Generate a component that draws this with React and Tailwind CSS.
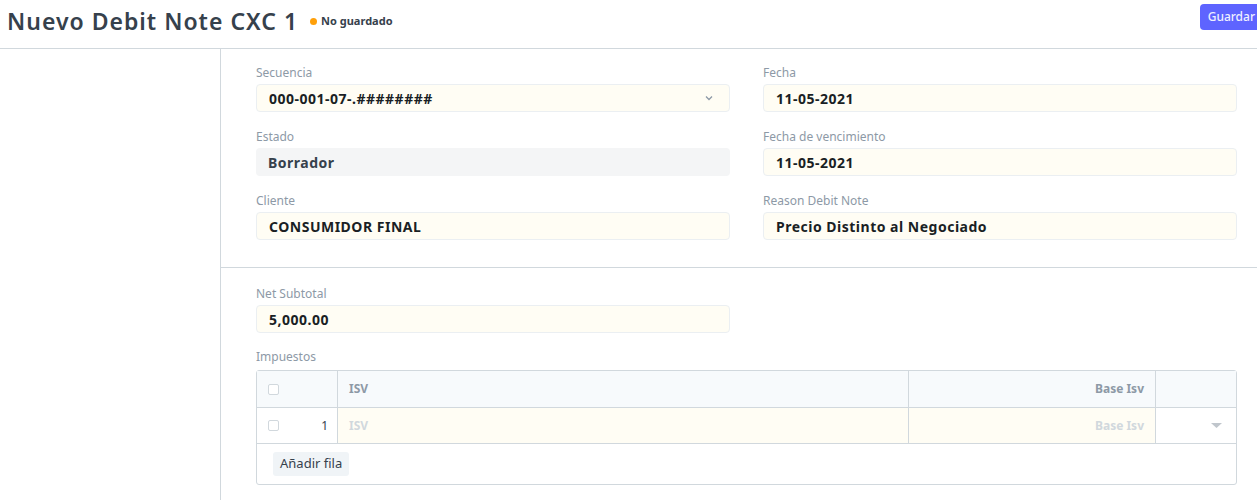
import React from 'react';

const font = { fontFamily: '"Noto Sans", "Open Sans", sans-serif' };

function Field({ label, value, select, readOnly }) {
  return (
    <div className="flex flex-col">
      <label className="text-[12px] leading-[18px] text-[#8d99a6] mb-[2px]">{label}</label>
      {readOnly ? (
        <div className="h-[28px] rounded-[4px] bg-[#f4f5f6] px-[12px] flex items-center text-[14px] tracking-[0.5px] font-bold text-[#36414c]">
          {value}
        </div>
      ) : (
        <div className="h-[28px] rounded-[4px] border border-[#ebeff2] bg-[#fffdf4] px-[12px] flex items-center justify-between text-[14px] tracking-[0.5px] font-bold text-[#1a1f24]">
          <span>{value}</span>
          {select && (
            <svg width="10" height="10" viewBox="0 0 10 10" className="mr-[3px]">
              <path d="M2 3.5 L5 6.5 L8 3.5" fill="none" stroke="#8d99a6" strokeWidth="1.3" />
            </svg>
          )}
        </div>
      )}
    </div>
  );
}

function Checkbox() {
  return <span className="inline-block w-[11px] h-[11px] rounded-[2px] border border-[#d1d8dd] bg-white"></span>;
}

export default function App() {
  return (
    <div className="w-[1257px] h-[500px] overflow-hidden bg-white" style={font}>
      <div className="w-[1272px]">
        {/* cabecera */}
        <div className="h-[49px] flex items-start justify-between border-b border-[#d1d8dd] pl-[7px] pr-[7px]">
          <div className="flex items-center mt-[5px]">
            <h1 className="text-[23px] leading-[32px] font-semibold text-[#36414c] tracking-[1px]">Nuevo Debit Note CXC 1</h1>
            <span className="ml-[12px] w-[7px] h-[7px] rounded-full bg-[#ffa00a]"></span>
            <span className="ml-[4px] text-[11px] font-bold text-[#36414c]">No guardado</span>
          </div>
          <button className="mt-[4px] h-[26px] pl-[8px] pr-[10px] rounded-[4px] bg-[#5e64ff] text-[#eef0ff] text-[12px] font-medium">
            Guardar
          </button>
        </div>

        <div className="flex">
          {/* barra lateral */}
          <div className="w-[221px] shrink-0 border-r border-[#d1d8dd] h-[460px]"></div>

          <div className="flex-1">
            {/* sección principal */}
            <div className="px-[35px] pt-[15px] pb-[27px] border-b border-[#d1d8dd] grid grid-cols-2 gap-x-[33px] gap-y-[16px]">
              <Field label="Secuencia" value="000-001-07-.########" select />
              <Field label="Fecha" value="11-05-2021" />
              <Field label="Estado" value="Borrador" readOnly />
              <Field label="Fecha de vencimiento" value="11-05-2021" />
              <Field label="Cliente" value="CONSUMIDOR FINAL" />
              <Field label="Reason Debit Note" value="Precio Distinto al Negociado" />
            </div>

            {/* totales */}
            <div className="px-[35px] pt-[17px]">
              <div className="grid grid-cols-2 gap-x-[33px]">
                <Field label="Net Subtotal" value="5,000.00" />
              </div>

              <div className="mt-[15px]">
                <label className="block text-[12px] leading-[18px] text-[#8d99a6] mb-[4px]">Impuestos</label>
                <div className="border border-[#d1d8dd] rounded-[3px] text-[12px]">
                  <div className="flex h-[37px] bg-[#f7fafc] border-b border-[#d1d8dd] font-bold text-[#8d99a6]">
                    <div className="w-[81px] flex items-center pl-[11px] border-r border-[#d1d8dd]">
                      <Checkbox />
                    </div>
                    <div className="w-[571px] flex items-center pl-[11px] border-r border-[#d1d8dd]">ISV</div>
                    <div className="w-[247px] flex items-center justify-end pr-[11px] border-r border-[#d1d8dd]">Base Isv</div>
                    <div className="flex-1"></div>
                  </div>
                  <div className="flex h-[36px] border-b border-[#d1d8dd]">
                    <div className="w-[81px] flex items-center justify-between pl-[11px] pr-[9px] border-r border-[#d1d8dd]">
                      <Checkbox />
                      <span className="text-[#36414c]">1</span>
                    </div>
                    <div className="w-[571px] flex items-center pl-[11px] border-r border-[#d1d8dd] bg-[#fffdf4] font-bold text-[#d1d8dd]">ISV</div>
                    <div className="w-[247px] flex items-center justify-end pr-[11px] border-r border-[#d1d8dd] bg-[#fffdf4] font-bold text-[#d1d8dd]">Base Isv</div>
                    <div className="flex-1 flex items-center justify-end pr-[14px]">
                      <svg width="11" height="6" viewBox="0 0 11 6">
                        <path d="M0 0 L11 0 L5.5 5 Z" fill="#c0c6cc" />
                      </svg>
                    </div>
                  </div>
                  <div className="h-[40px] flex items-center pl-[16px]">
                    <button className="h-[24px] px-[7px] rounded-[3px] bg-[#f0f4f7] text-[13px] text-[#36414c]">Añadir fila</button>
                  </div>
                </div>
              </div>
            </div>
          </div>
        </div>
      </div>
    </div>
  );
}
